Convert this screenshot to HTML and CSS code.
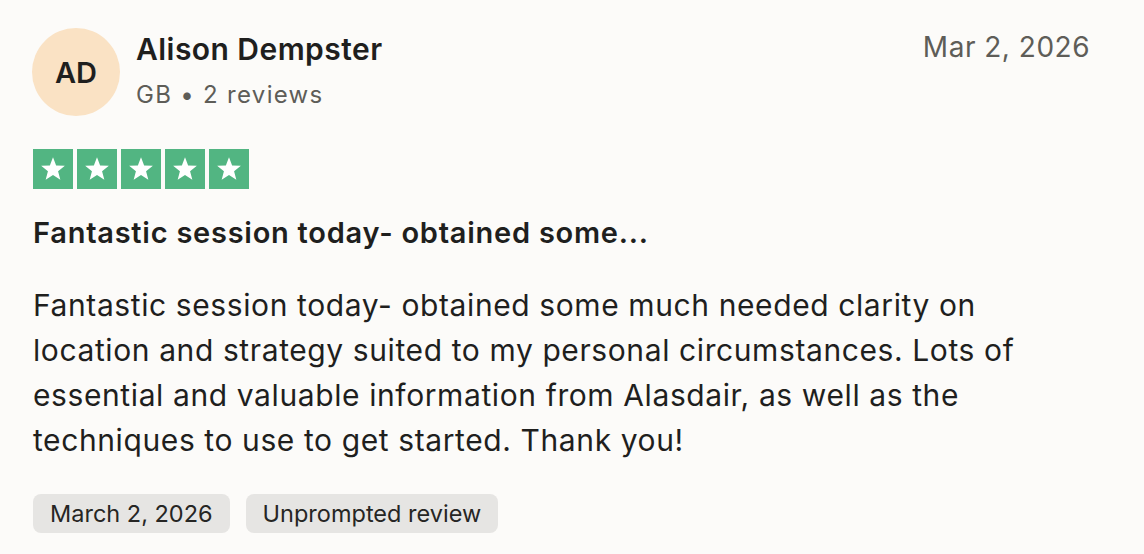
FILE: index.html
```html
<!DOCTYPE html>
<html lang="en">
<head>
<meta charset="utf-8">
<title>Review</title>
<link rel="stylesheet" href="styles.css">
</head>
<body>
<article class="review">
  <header class="review-head">
    <div class="author">
      <div class="avatar">AD</div>
      <div class="author-info">
        <div class="author-name">Alison Dempster</div>
        <div class="author-meta">GB • 2 reviews</div>
      </div>
    </div>
    <time class="review-date">Mar 2, 2026</time>
  </header>
  <div class="stars">
    <span class="star"><svg viewBox="0 0 24 24"><path d="M12 3.2l2.35 6.1 6.55.35-5.1 4.1 1.7 6.35L12 16.5l-5.5 3.6 1.7-6.35-5.1-4.1 6.55-.35z" fill="#fff"/></svg></span>
    <span class="star"><svg viewBox="0 0 24 24"><path d="M12 3.2l2.35 6.1 6.55.35-5.1 4.1 1.7 6.35L12 16.5l-5.5 3.6 1.7-6.35-5.1-4.1 6.55-.35z" fill="#fff"/></svg></span>
    <span class="star"><svg viewBox="0 0 24 24"><path d="M12 3.2l2.35 6.1 6.55.35-5.1 4.1 1.7 6.35L12 16.5l-5.5 3.6 1.7-6.35-5.1-4.1 6.55-.35z" fill="#fff"/></svg></span>
    <span class="star"><svg viewBox="0 0 24 24"><path d="M12 3.2l2.35 6.1 6.55.35-5.1 4.1 1.7 6.35L12 16.5l-5.5 3.6 1.7-6.35-5.1-4.1 6.55-.35z" fill="#fff"/></svg></span>
    <span class="star"><svg viewBox="0 0 24 24"><path d="M12 3.2l2.35 6.1 6.55.35-5.1 4.1 1.7 6.35L12 16.5l-5.5 3.6 1.7-6.35-5.1-4.1 6.55-.35z" fill="#fff"/></svg></span>
  </div>
  <h2 class="review-title">Fantastic session today- obtained some...</h2>
  <p class="review-body">Fantastic session today- obtained some much needed clarity on location and strategy suited to my personal circumstances. Lots of essential and valuable information from Alasdair, as well as the techniques to use to get started. Thank you!</p>
  <div class="tags">
    <span class="tag">March 2, 2026</span>
    <span class="tag">Unprompted review</span>
  </div>
</article>
</body>
</html>
```

FILE: styles.css
```css
html, body {
  margin: 0;
  padding: 0;
  background: #fcfbf9;
}
body {
  font-family: Inter, "Liberation Sans", sans-serif;
  color: #1f1f1e;
}
.review {
  padding: 28px 54px 0 33px;
}
.review-head {
  display: flex;
  justify-content: space-between;
  align-items: flex-start;
}
.author {
  display: flex;
  align-items: flex-start;
  gap: 16px;
}
.avatar {
  width: 88px;
  height: 88px;
  border-radius: 50%;
  background: #fae2c4;
  display: flex;
  align-items: center;
  justify-content: center;
  font-size: 29px;
  font-weight: 600;
  color: #1f1f1e;
  margin-left: -1px;
  flex-shrink: 0;
}
.author-name {
  font-size: 30px;
  font-weight: 600;
  line-height: 36px;
  letter-spacing: 0.45px;
  margin-top: 3px;
}
.author-meta {
  font-size: 24px;
  line-height: 32px;
  letter-spacing: 1.3px;
  color: #5e5d58;
  margin-top: 12px;
}
.review-date {
  font-size: 28px;
  line-height: 36px;
  letter-spacing: 0.5px;
  color: #5e5d58;
  margin-top: 1px;
}
.stars {
  display: flex;
  gap: 4px;
  margin-top: 33px;
}
.star {
  width: 40px;
  height: 40px;
  background: #52b582;
  display: flex;
  align-items: center;
  justify-content: center;
}
.star svg {
  width: 32px;
  height: 32px;
}
.review-title {
  margin: 24px 0 0;
  font-size: 29px;
  font-weight: 600;
  line-height: 40px;
  letter-spacing: 0.75px;
}
.review-body {
  margin: 30px 0 0;
  font-size: 30px;
  line-height: 45px;
  letter-spacing: 0.6px;
}
.tags {
  display: flex;
  gap: 16px;
  margin-top: 31px;
}
.tag {
  background: #e6e5e3;
  border-radius: 8px;
  height: 39px;
  padding: 0 17px;
  display: flex;
  align-items: center;
  font-size: 23.5px;
  color: #262624;
}
```
